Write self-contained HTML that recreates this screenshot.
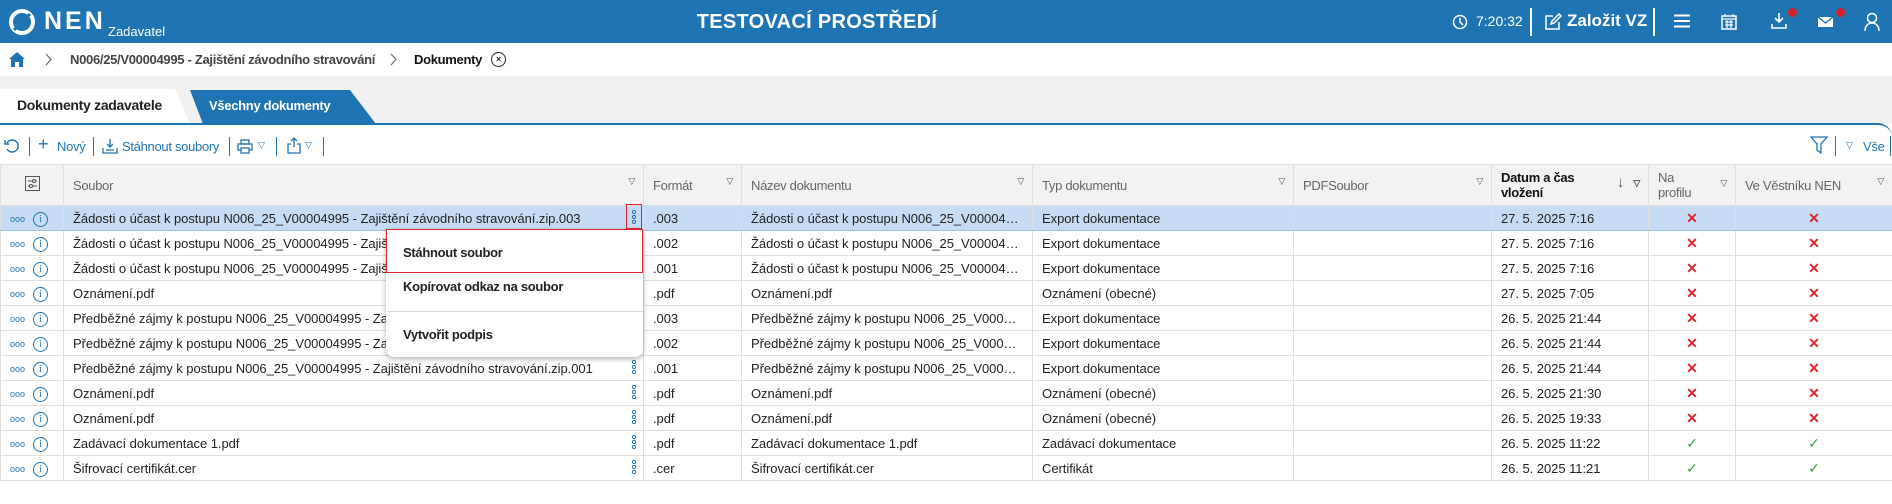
<!DOCTYPE html>
<html><head><meta charset="utf-8">
<style>
*{box-sizing:border-box;margin:0;padding:0}
body{width:1892px;height:504px;overflow:hidden;background:#fff;font-family:"Liberation Sans",sans-serif;color:#222;position:relative}
.hdr{position:absolute;left:0;top:0;width:1892px;height:43px;background:#1f74b3;color:#fff}
.abs{position:absolute}
.bc{position:absolute;top:43px;left:0;width:1892px;height:33px;background:#fff;box-shadow:0 2px 4px rgba(0,0,0,.12);font-size:13px;font-weight:bold;letter-spacing:-.3px}
.gray{position:absolute;top:76px;left:0;width:1892px;height:48px;background:#f1f1f1}
.panel{position:absolute;top:123px;left:0;width:1892px;height:381px;background:#fff;border-top:2px solid #1f74b3;border-top-right-radius:14px}
table{position:absolute;top:164px;left:0;border-collapse:collapse;table-layout:fixed;width:1892px;font-size:13px;letter-spacing:-.05px}
td,th{border:1px solid #dedede;height:25px;padding:0 9px;white-space:nowrap;overflow:hidden;text-overflow:ellipsis;text-align:left;font-weight:normal}
th{height:41px;background:#f2f2f2;color:#666;vertical-align:middle;position:relative;letter-spacing:-.3px}
th .f{position:absolute;right:8px;top:11px;font-size:9px;color:#555}
tr.sel td{background:#c6dbf4;border-bottom-color:#9cc0e8}
.x{color:#d8262c;text-align:center;font-weight:bold;font-size:14px}
.ok{color:#3aa33a;text-align:center;font-size:14px}
.dots{color:#1f74b3;font-size:9px;letter-spacing:0}
.info{display:inline-block;width:15px;height:15px;border:1.3px solid #1f74b3;border-radius:50%;color:#1f74b3;font-size:10px;line-height:13px;text-align:center;margin-left:8px;font-family:"Liberation Serif",serif}
.keb{position:absolute;width:6px;height:14px}
.menu{position:absolute;left:386px;top:229px;width:257px;height:128px;background:#fff;box-shadow:0 2px 6px rgba(0,0,0,.3);border-radius:0 0 8px 8px;font-size:13px;font-weight:bold;letter-spacing:-.3px}
.tb{position:absolute;top:137px;font-size:13px;color:#1f74b3;letter-spacing:-.3px}
.sep{position:absolute;width:1px;background:#1f74b3}
</style></head><body>
<svg width="0" height="0" style="position:absolute"><defs><g id="k"><circle cx="3" cy="2" r="1.6" fill="none" stroke="#1f74b3" stroke-width="1"/><circle cx="3" cy="7" r="1.6" fill="none" stroke="#1f74b3" stroke-width="1"/><circle cx="3" cy="12" r="1.6" fill="none" stroke="#1f74b3" stroke-width="1"/></g></defs></svg>
<div class="hdr">
  <svg class="abs" style="left:8px;top:8px" width="28" height="28" viewBox="0 0 28 28"><circle cx="14" cy="14" r="11" fill="none" stroke="#fff" stroke-width="4"/><path d="M6 22 L22 6" stroke="#1f74b3" stroke-width="3"/></svg>
  <div class="abs" style="left:44px;top:7px;font-size:25px;font-weight:bold;letter-spacing:3px">NEN</div>
  <div class="abs" style="left:108px;top:24px;font-size:13px">Zadavatel</div>
  <div class="abs" style="left:0;width:1634px;text-align:center;top:11px;font-size:20px;font-weight:bold;letter-spacing:.3px">TESTOVACÍ PROSTŘEDÍ</div>
  <svg class="abs" style="left:1452px;top:14px" width="16" height="16" viewBox="0 0 16 16"><circle cx="8" cy="8" r="6.5" fill="none" stroke="#fff" stroke-width="1.5"/><path d="M8 4v4l3 3" fill="none" stroke="#fff" stroke-width="1.5"/></svg>
  <div class="abs" style="left:1476px;top:13px;font-size:14px">7:20:32</div>
  <div class="abs" style="left:1530px;top:8px;width:2px;height:28px;background:#fff"></div>
  <svg class="abs" style="left:1544px;top:13px" width="18" height="18" viewBox="0 0 18 18"><path d="M9 3H2v13h13V9" fill="none" stroke="#fff" stroke-width="1.5"/><path d="M7 11l1-3 7-7 2 2-7 7z" fill="none" stroke="#fff" stroke-width="1.5"/></svg>
  <div class="abs" style="left:1567px;top:11px;font-size:17px;font-weight:bold">Založit VZ</div>
  <div class="abs" style="left:1653px;top:8px;width:2px;height:28px;background:#fff"></div>
  <svg class="abs" style="left:1674px;top:14px" width="16" height="14"><path d="M0 1.5h16M0 7h16M0 12.5h16" stroke="#fff" stroke-width="2"/></svg>
  <svg class="abs" style="left:1721px;top:13px" width="16" height="17" viewBox="0 0 16 17"><rect x="1" y="3" width="14" height="13" fill="none" stroke="#fff" stroke-width="1.5"/><path d="M1 6h14M4 1v3M12 1v3M4 9h8M4 12h8M6 7v8M10 7v8" stroke="#fff" stroke-width="1.2"/></svg>
  <svg class="abs" style="left:1770px;top:12px" width="18" height="18" viewBox="0 0 18 18"><path d="M9 1v9M5 6l4 4 4-4M2 12v4h14v-4" fill="none" stroke="#fff" stroke-width="1.6"/></svg>
  <div class="abs" style="left:1788px;top:8px;width:9px;height:9px;border-radius:50%;background:#d2232a"></div>
  <svg class="abs" style="left:1817px;top:16px" width="17" height="12"><rect x="1" y="1" width="15" height="10" fill="#fff"/><path d="M1 1l7.5 6 7.5-6" fill="none" stroke="#1f74b3" stroke-width="1.3"/></svg>
  <div class="abs" style="left:1836px;top:8px;width:9px;height:9px;border-radius:50%;background:#d2232a"></div>
  <svg class="abs" style="left:1864px;top:12px" width="16" height="19" viewBox="0 0 16 19"><circle cx="8" cy="6" r="4.5" fill="none" stroke="#fff" stroke-width="1.5"/><path d="M1 19c0-5 3-8 7-8s7 3 7 8" fill="none" stroke="#fff" stroke-width="1.5"/></svg>
</div>
<div class="bc">
  <svg class="abs" style="left:8px;top:8px" width="18" height="16" viewBox="0 0 18 16"><path d="M9 1L1 8h2v8h4v-5h4v5h4V8h2z" fill="#1f74b3"/></svg>
  <svg class="abs" style="left:45px;top:10px" width="7" height="13"><path d="M1 1l5 5.5L1 12" fill="none" stroke="#666" stroke-width="1.1"/></svg>
  <div class="abs" style="left:70px;top:9px;color:#444">N006/25/V00004995 - Zajištění závodního stravování</div>
  <svg class="abs" style="left:390px;top:10px" width="7" height="13"><path d="M1 1l5 5.5L1 12" fill="none" stroke="#666" stroke-width="1.1"/></svg>
  <div class="abs" style="left:414px;top:9px;color:#111">Dokumenty</div>
  <div class="abs" style="left:491px;top:9px;width:15px;height:15px;border:1.3px solid #222;border-radius:50%;font-size:9px;text-align:center;line-height:12px">×</div>
</div>
<div class="gray"></div>
<div class="abs" style="left:0;top:89px;width:190px;height:35px;background:#fff;clip-path:polygon(0 0,175px 0,190px 35px,0 35px)"></div>
<div class="abs" style="left:17px;top:97px;font-size:14px;font-weight:bold;letter-spacing:-.3px">Dokumenty zadavatele</div>
<div class="abs" style="left:190px;top:90px;width:186px;height:34px;background:#1f74b3;clip-path:polygon(0 0,160px 0,186px 34px,13px 34px)"></div>
<div class="abs" style="left:209px;top:98px;font-size:13px;font-weight:bold;color:#fff;letter-spacing:-.3px">Všechny dokumenty</div>
<div class="panel"></div>
<svg class="abs" style="left:4px;top:138px" width="16" height="16" viewBox="0 0 16 16"><path d="M3 5a6 6 0 1 1 0 6" fill="none" stroke="#1f74b3" stroke-width="1.4"/><path d="M1 2v4h4" fill="none" stroke="#1f74b3" stroke-width="1.4"/></svg>
<div class="sep" style="left:29px;top:137px;height:19px"></div>
<div class="tb" style="left:38px;top:134px;font-size:18px">+</div>
<div class="tb" style="left:57px;top:139px">Nový</div>
<div class="sep" style="left:93px;top:137px;height:19px"></div>
<svg class="abs" style="left:102px;top:138px" width="16" height="16" viewBox="0 0 16 16"><path d="M8 1v8M5 6l3 3 3-3M1 10v5h14v-5M4 12h8" fill="none" stroke="#1f74b3" stroke-width="1.3"/></svg>
<div class="tb" style="left:122px;top:139px">Stáhnout soubory</div>
<div class="sep" style="left:229px;top:137px;height:19px"></div>
<svg class="abs" style="left:237px;top:139px" width="16" height="15" viewBox="0 0 16 15"><rect x="4" y="1" width="8" height="4" fill="none" stroke="#1f74b3" stroke-width="1.3"/><rect x="1" y="5" width="14" height="6" fill="none" stroke="#1f74b3" stroke-width="1.3"/><rect x="4" y="9" width="8" height="5" fill="#fff" stroke="#1f74b3" stroke-width="1.3"/></svg>
<div class="tb" style="left:258px;top:140px;font-size:9px">▽</div>
<div class="sep" style="left:276px;top:137px;height:19px"></div>
<svg class="abs" style="left:287px;top:137px" width="14" height="17" viewBox="0 0 14 17"><path d="M7 1v9M4 4l3-3 3 3M4 7H1v9h12V7h-3" fill="none" stroke="#1f74b3" stroke-width="1.3"/></svg>
<div class="tb" style="left:305px;top:140px;font-size:9px">▽</div>
<div class="sep" style="left:323px;top:137px;height:19px"></div>
<svg class="abs" style="left:1810px;top:136px" width="18" height="18" viewBox="0 0 18 18"><path d="M1 1h16l-6 7v9l-4-3V8z" fill="none" stroke="#1f74b3" stroke-width="1.3"/></svg>
<div class="sep" style="left:1835px;top:136px;height:20px"></div>
<div class="tb" style="left:1846px;top:140px;font-size:9px">▽</div>
<div class="tb" style="left:1863px;top:139px">Vše</div>
<div class="sep" style="left:1890px;top:136px;height:20px"></div>

<table>
<colgroup><col style="width:63px"><col style="width:580px"><col style="width:98px"><col style="width:291px"><col style="width:261px"><col style="width:198px"><col style="width:157px"><col style="width:87px"><col style="width:157px"></colgroup>
<tr><th style="text-align:center"><svg width="15" height="15" viewBox="0 0 15 15"><rect x=".5" y=".5" width="14" height="14" fill="none" stroke="#555"/><path d="M3 5h9M3 10h9" stroke="#555"/><circle cx="9" cy="5" r="1.5" fill="#f2f2f2" stroke="#555"/><circle cx="6" cy="10" r="1.5" fill="#f2f2f2" stroke="#555"/></svg></th>
<th>Soubor<span class="f">▽</span></th><th>Formát<span class="f">▽</span></th><th>Název dokumentu<span class="f">▽</span></th><th>Typ dokumentu<span class="f">▽</span></th><th>PDFSoubor<span class="f">▽</span></th>
<th style="color:#111;font-weight:bold;line-height:15px;white-space:normal">Datum a čas<br>vložení<span class="f" style="right:24px;top:10px;font-size:15px;font-weight:normal">↓</span><span class="f">▽</span></th>
<th style="line-height:15px;white-space:normal">Na<br>profilu<span class="f">▽</span></th><th>Ve Věstníku NEN<span class="f">▽</span></th></tr>
<tr class="sel"><td><span class="dots">ooo</span><span class="info">i</span></td><td>Žádosti o účast k postupu N006_25_V00004995 - Zajištění závodního stravování.zip.003</td><td>.003</td><td>Žádosti o účast k postupu N006_25_V00004995 - Zajištění</td><td>Export dokumentace</td><td></td><td>27. 5. 2025 7:16</td><td class="x">✕</td><td class="x">✕</td></tr>
<tr><td><span class="dots">ooo</span><span class="info">i</span></td><td>Žádosti o účast k postupu N006_25_V00004995 - Zajištění závodního stravování.zip.002</td><td>.002</td><td>Žádosti o účast k postupu N006_25_V00004995 - Zajištění</td><td>Export dokumentace</td><td></td><td>27. 5. 2025 7:16</td><td class="x">✕</td><td class="x">✕</td></tr>
<tr><td><span class="dots">ooo</span><span class="info">i</span></td><td>Žádosti o účast k postupu N006_25_V00004995 - Zajištění závodního stravování.zip.001</td><td>.001</td><td>Žádosti o účast k postupu N006_25_V00004995 - Zajištění</td><td>Export dokumentace</td><td></td><td>27. 5. 2025 7:16</td><td class="x">✕</td><td class="x">✕</td></tr>
<tr><td><span class="dots">ooo</span><span class="info">i</span></td><td>Oznámení.pdf</td><td>.pdf</td><td>Oznámení.pdf</td><td>Oznámení (obecné)</td><td></td><td>27. 5. 2025 7:05</td><td class="x">✕</td><td class="x">✕</td></tr>
<tr><td><span class="dots">ooo</span><span class="info">i</span></td><td>Předběžné zájmy k postupu N006_25_V00004995 - Zajištění závodního stravování.zip.003</td><td>.003</td><td>Předběžné zájmy k postupu N006_25_V00004995 - Zajištění</td><td>Export dokumentace</td><td></td><td>26. 5. 2025 21:44</td><td class="x">✕</td><td class="x">✕</td></tr>
<tr><td><span class="dots">ooo</span><span class="info">i</span></td><td>Předběžné zájmy k postupu N006_25_V00004995 - Zajištění závodního stravování.zip.002</td><td>.002</td><td>Předběžné zájmy k postupu N006_25_V00004995 - Zajištění</td><td>Export dokumentace</td><td></td><td>26. 5. 2025 21:44</td><td class="x">✕</td><td class="x">✕</td></tr>
<tr><td><span class="dots">ooo</span><span class="info">i</span></td><td>Předběžné zájmy k postupu N006_25_V00004995 - Zajištění závodního stravování.zip.001</td><td>.001</td><td>Předběžné zájmy k postupu N006_25_V00004995 - Zajištění</td><td>Export dokumentace</td><td></td><td>26. 5. 2025 21:44</td><td class="x">✕</td><td class="x">✕</td></tr>
<tr><td><span class="dots">ooo</span><span class="info">i</span></td><td>Oznámení.pdf</td><td>.pdf</td><td>Oznámení.pdf</td><td>Oznámení (obecné)</td><td></td><td>26. 5. 2025 21:30</td><td class="x">✕</td><td class="x">✕</td></tr>
<tr><td><span class="dots">ooo</span><span class="info">i</span></td><td>Oznámení.pdf</td><td>.pdf</td><td>Oznámení.pdf</td><td>Oznámení (obecné)</td><td></td><td>26. 5. 2025 19:33</td><td class="x">✕</td><td class="x">✕</td></tr>
<tr><td><span class="dots">ooo</span><span class="info">i</span></td><td>Zadávací dokumentace 1.pdf</td><td>.pdf</td><td>Zadávací dokumentace 1.pdf</td><td>Zadávací dokumentace</td><td></td><td>26. 5. 2025 11:22</td><td class="ok">✓</td><td class="ok">✓</td></tr>
<tr><td><span class="dots">ooo</span><span class="info">i</span></td><td>Šifrovací certifikát.cer</td><td>.cer</td><td>Šifrovací certifikát.cer</td><td>Certifikát</td><td></td><td>26. 5. 2025 11:21</td><td class="ok">✓</td><td class="ok">✓</td></tr>
</table>
<div class="abs" style="left:626px;top:204px;width:16px;height:25px;border:1px solid #e0262c"></div>
<svg class="keb" style="left:631px;top:210px"><use href="#k"/></svg>
<svg class="keb" style="left:631px;top:360px"><use href="#k"/></svg>
<svg class="keb" style="left:631px;top:385px"><use href="#k"/></svg>
<svg class="keb" style="left:631px;top:410px"><use href="#k"/></svg>
<svg class="keb" style="left:631px;top:435px"><use href="#k"/></svg>
<svg class="keb" style="left:631px;top:460px"><use href="#k"/></svg>
<div class="menu">
  <div class="abs" style="left:0;top:0;width:257px;height:44px;border:1px solid #e0262c"></div>
  <div class="abs" style="left:17px;top:16px">Stáhnout soubor</div>
  <div class="abs" style="left:17px;top:50px">Kopírovat odkaz na soubor</div>
  <div class="abs" style="left:0;top:82px;width:257px;height:1px;background:#ddd"></div>
  <div class="abs" style="left:17px;top:98px">Vytvořit podpis</div>
</div>
</body></html>
